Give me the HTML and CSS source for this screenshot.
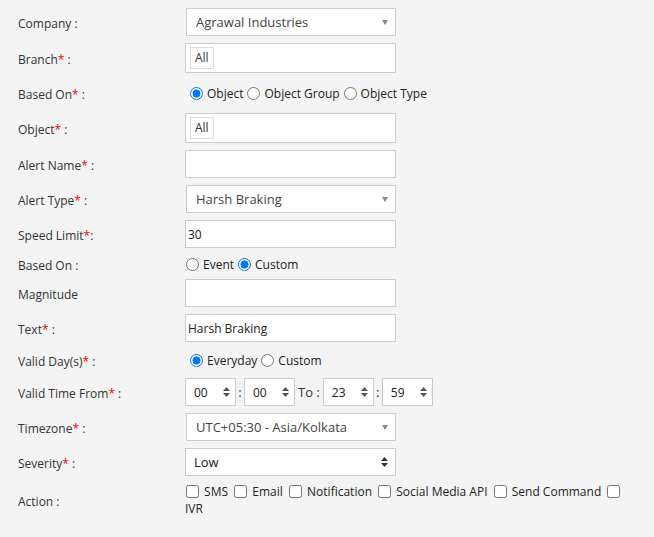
FILE: index.html
```html
<!DOCTYPE html>
<html lang="en">
<head>
    <meta charset="UTF-8">
    <meta name="viewport" content="width=device-width, initial-scale=1.0">
    <title>Add Alert</title>
    <link rel="stylesheet" href="styles.css">
</head>
<body>
    <div class="form">
        <div class="row h28">
            <label class="lbl">Company :</label>
            <div class="chosen">Agrawal Industries<span class="caret"></span></div>
        </div>

        <div class="row h30">
            <label class="lbl">Branch<span class="req">*</span> :</label>
            <div class="multi"><span class="tag">All</span></div>
        </div>

        <div class="row h26">
            <label class="lbl">Based On<span class="req">*</span> :</label>
            <div class="radios indent">
                <label class="opt"><input type="radio" name="based" checked>Object</label>
                <label class="opt"><input type="radio" name="based">Object Group</label>
                <label class="opt"><input type="radio" name="based">Object Type</label>
            </div>
        </div>

        <div class="row h30">
            <label class="lbl">Object<span class="req">*</span> :</label>
            <div class="multi"><span class="tag">All</span></div>
        </div>

        <div class="row h28">
            <label class="lbl">Alert Name<span class="req">*</span> :</label>
            <input class="field" type="text">
        </div>

        <div class="row h28">
            <label class="lbl">Alert Type<span class="req">*</span> :</label>
            <div class="chosen">Harsh Braking<span class="caret"></span></div>
        </div>

        <div class="row h28">
            <label class="lbl">Speed Limit<span class="req">*</span>:</label>
            <input class="field" type="text" value="30">
        </div>

        <div class="row h17">
            <label class="lbl">Based On :</label>
            <div class="radios">
                <label class="opt"><input type="radio" name="mode">Event</label>
                <label class="opt"><input type="radio" name="mode" checked>Custom</label>
            </div>
        </div>

        <div class="row h28">
            <label class="lbl">Magnitude</label>
            <input class="field" type="text">
        </div>

        <div class="row h28">
            <label class="lbl">Text<span class="req">*</span> :</label>
            <input class="field" type="text" value="Harsh Braking">
        </div>

        <div class="row h22">
            <label class="lbl">Valid Day(s)<span class="req">*</span> :</label>
            <div class="radios indent">
                <label class="opt"><input type="radio" name="days" checked>Everyday</label>
                <label class="opt"><input type="radio" name="days">Custom</label>
            </div>
        </div>

        <div class="row h28">
            <label class="lbl">Valid Time From<span class="req">*</span> :</label>
            <div class="times">
                <div class="spin">00<svg width="7" height="10" viewBox="0 0 7 10"><path d="M3.5 0L7 4H0z M3.5 10L0 6h7z" fill="#555"/></svg></div>
                <span class="sep">:</span>
                <div class="spin">00<svg width="7" height="10" viewBox="0 0 7 10"><path d="M3.5 0L7 4H0z M3.5 10L0 6h7z" fill="#555"/></svg></div>
                <span class="to">To :</span>
                <div class="spin">23<svg width="7" height="10" viewBox="0 0 7 10"><path d="M3.5 0L7 4H0z M3.5 10L0 6h7z" fill="#555"/></svg></div>
                <span class="sep">:</span>
                <div class="spin">59<svg width="7" height="10" viewBox="0 0 7 10"><path d="M3.5 0L7 4H0z M3.5 10L0 6h7z" fill="#555"/></svg></div>
            </div>
        </div>

        <div class="row h28">
            <label class="lbl">Timezone<span class="req">*</span> :</label>
            <div class="chosen">UTC+05:30 - Asia/Kolkata<span class="caret"></span></div>
        </div>

        <div class="row h28">
            <label class="lbl">Severity<span class="req">*</span> :</label>
            <div class="native">Low<svg width="7" height="10" viewBox="0 0 7 10"><path d="M3.5 0L7 4H0z M3.5 10L0 6h7z" fill="#333"/></svg></div>
        </div>

        <div class="row h34">
            <label class="lbl">Action :</label>
            <div class="checks">
                <label><input type="checkbox"> SMS</label>
                <label><input type="checkbox"> Email</label>
                <label><input type="checkbox"> Notification</label>
                <label><input type="checkbox"> Social Media API</label>
                <label><input type="checkbox"> Send Command</label>
                <label><input type="checkbox"> IVR</label>
            </div>
        </div>
    </div>
</body>
</html>
```

FILE: styles.css
```css
body {
    margin: 0;
    background: #f4f4f4;
    font-family: "Open Sans", "Liberation Sans", sans-serif;
    font-size: 12px;
    color: #333;
}

.form {
    display: flex;
    flex-direction: column;
    gap: 7px;
    padding: 8px 0 0 18px;
}

.row {
    display: grid;
    grid-template-columns: 167px 450px;
    align-items: center;
}

.h17 { height: 17px; }
.h22 { height: 22px; }
.h26 { height: 26px; }
.h28 { height: 28px; }
.h30 { height: 30px; }
.h34 { height: 34px; }

.lbl {
    padding-top: 3px;
    line-height: 16px;
}

.req {
    color: #f00;
}

.field,
.chosen,
.multi,
.native {
    box-sizing: border-box;
    width: 211px;
    border: 1px solid #ccc;
    background: #fff;
}

.field {
    height: 28px;
    padding: 0 2px;
    font-family: inherit;
    font-size: 12px;
    color: #222;
    outline: none;
}

.chosen {
    display: flex;
    align-items: center;
    justify-content: space-between;
    height: 28px;
    margin-left: 1px;
    width: 210px;
    padding: 0 7px 0 9px;
    font-size: 13px;
    color: #444;
}

.caret {
    width: 0;
    height: 0;
    border-left: 3.5px solid transparent;
    border-right: 3.5px solid transparent;
    border-top: 5px solid #888;
}

.multi {
    height: 30px;
    padding: 3px 4px;
}

.tag {
    display: inline-block;
    box-sizing: border-box;
    height: 22px;
    padding: 0 4px;
    border: 1px solid #ddd;
    line-height: 20px;
    font-size: 12px;
    color: #333;
}

.radios {
    display: flex;
    align-items: center;
    padding-left: 1px;
}

.radios.indent {
    padding-left: 5px;
}

.opt {
    display: flex;
    align-items: center;
    gap: 4px;
    margin-right: 4px;
    color: #222;
}

.opt input {
    margin: 0;
    width: 13px;
    height: 13px;
}

.times {
    display: flex;
    align-items: center;
}

.spin {
    box-sizing: border-box;
    display: flex;
    align-items: center;
    justify-content: space-between;
    width: 51px;
    height: 28px;
    padding: 0 5px 0 8px;
    border: 1px solid #ccc;
    background: #fff;
    font-size: 12px;
    color: #222;
}

.sep {
    width: 8px;
    text-align: center;
    font-size: 13px;
}

.to {
    padding: 0 3px;
    font-size: 13px;
}

.native {
    display: flex;
    align-items: center;
    justify-content: space-between;
    height: 28px;
    padding: 0 7px 0 8px;
    font-size: 13px;
    color: #222;
}

.checks {
    width: 445px;
    line-height: 17px;
    color: #222;
}

.checks input {
    width: 13px;
    height: 13px;
    margin: 0 2px 0 3px;
    vertical-align: -2px;
}

.checks label:first-child input {
    margin-left: 1px;
}
```
